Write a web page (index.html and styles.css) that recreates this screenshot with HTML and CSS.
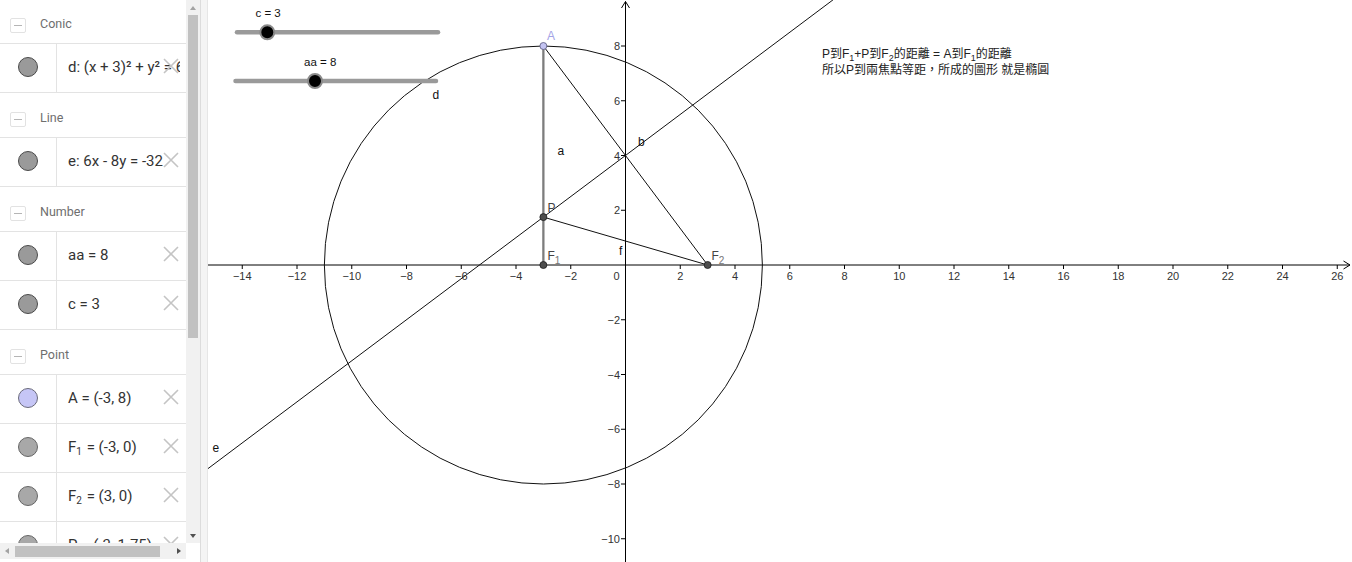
FILE: index.html
```html
<!DOCTYPE html>
<html>
<head>
<meta charset="utf-8">
<title>GeoGebra</title>
<link rel="stylesheet" href="styles.css">
</head>
<body>
<div class="app">
  <aside class="algebra">
    <div class="alg-main">
      <div class="alg-list">
        <div class="group first"><span class="collapse"></span><span class="gname">Conic</span></div>
        <div class="item"><div class="marble"><span class="dot"></span></div><div class="expr"><span>d: (x + 3)² + y² = 64</span></div><svg class="del" viewBox="0 0 16 16"><path d="M1 1L15 15M15 1L1 15"/></svg></div>
        <div class="group"><span class="collapse"></span><span class="gname">Line</span></div>
        <div class="item"><div class="marble"><span class="dot"></span></div><div class="expr"><span>e: 6x - 8y = -32</span></div><svg class="del" viewBox="0 0 16 16"><path d="M1 1L15 15M15 1L1 15"/></svg></div>
        <div class="group"><span class="collapse"></span><span class="gname">Number</span></div>
        <div class="item"><div class="marble"><span class="dot"></span></div><div class="expr"><span>aa = 8</span></div><svg class="del" viewBox="0 0 16 16"><path d="M1 1L15 15M15 1L1 15"/></svg></div>
        <div class="item"><div class="marble"><span class="dot"></span></div><div class="expr"><span>c = 3</span></div><svg class="del" viewBox="0 0 16 16"><path d="M1 1L15 15M15 1L1 15"/></svg></div>
        <div class="group"><span class="collapse"></span><span class="gname">Point</span></div>
        <div class="item"><div class="marble"><span class="dot blue"></span></div><div class="expr"><span>A = (-3, 8)</span></div><svg class="del" viewBox="0 0 16 16"><path d="M1 1L15 15M15 1L1 15"/></svg></div>
        <div class="item"><div class="marble"><span class="dot light"></span></div><div class="expr"><span>F<sub>1</sub> = (-3, 0)</span></div><svg class="del" viewBox="0 0 16 16"><path d="M1 1L15 15M15 1L1 15"/></svg></div>
        <div class="item"><div class="marble"><span class="dot light"></span></div><div class="expr"><span>F<sub>2</sub> = (3, 0)</span></div><svg class="del" viewBox="0 0 16 16"><path d="M1 1L15 15M15 1L1 15"/></svg></div>
        <div class="item"><div class="marble"><span class="dot light"></span></div><div class="expr"><span>P = (-3, 1.75)</span></div><svg class="del" viewBox="0 0 16 16"><path d="M1 1L15 15M15 1L1 15"/></svg></div>
      </div>
      <div class="vscroll">
        <span class="sb-btn up"></span>
        <span class="vthumb"></span>
        <span class="sb-fill"></span>
        <span class="sb-btn down"></span>
      </div>
    </div>
    <div class="hscroll-row">
      <div class="hscroll">
        <span class="sb-btn left"></span>
        <span class="hthumb"></span>
        <span class="sb-fill"></span>
        <span class="sb-btn right"></span>
      </div>
      <div class="corner"></div>
    </div>
  </aside>
  <div class="splitter"></div>
  <main class="graphics">
    <svg class="plot" width="1144" height="562" viewBox="208 0 1144 562">
      <!-- axes -->
      <g class="axis">
        <line x1="208" y1="265" x2="1350" y2="265"/>
        <polyline points="1343.5,261 1350,265 1343.5,269"/>
        <line x1="625.5" y1="1.5" x2="625.5" y2="562"/>
        <polyline points="621.5,8 625.5,1.5 629.5,8"/>
        <path d="M242.25 265v4M297 265v4M351.75 265v4M406.5 265v4M461.25 265v4M516 265v4M570.75 265v4M680.25 265v4M735 265v4M789.75 265v4M844.5 265v4M899.25 265v4M954 265v4M1008.75 265v4M1063.5 265v4M1118.25 265v4M1173 265v4M1227.75 265v4M1282.5 265v4M1337.25 265v4"/>
        <path d="M621 46h4.5M621 100.75h4.5M621 155.5h4.5M621 210.25h4.5M621 319.75h4.5M621 374.5h4.5M621 429.25h4.5M621 484h4.5M621 538.75h4.5"/>
      </g>
      <g class="ax xl">
        <text x="242.25" y="279.5">−14</text>
        <text x="297" y="279.5">−12</text>
        <text x="351.75" y="279.5">−10</text>
        <text x="406.5" y="279.5">−8</text>
        <text x="461.25" y="279.5">−6</text>
        <text x="516" y="279.5">−4</text>
        <text x="570.75" y="279.5">−2</text>
        <text x="616.5" y="279.5">0</text>
        <text x="680.25" y="279.5">2</text>
        <text x="735" y="279.5">4</text>
        <text x="789.75" y="279.5">6</text>
        <text x="844.5" y="279.5">8</text>
        <text x="899.25" y="279.5">10</text>
        <text x="954" y="279.5">12</text>
        <text x="1008.75" y="279.5">14</text>
        <text x="1063.5" y="279.5">16</text>
        <text x="1118.25" y="279.5">18</text>
        <text x="1173" y="279.5">20</text>
        <text x="1227.75" y="279.5">22</text>
        <text x="1282.5" y="279.5">24</text>
        <text x="1337.25" y="279.5">26</text>
      </g>
      <g class="ax yl">
        <text x="620" y="50">8</text>
        <text x="620" y="104.75">6</text>
        <text x="620" y="159.5">4</text>
        <text x="620" y="214.25">2</text>
        <text x="620" y="323.75">−2</text>
        <text x="620" y="378.5">−4</text>
        <text x="620" y="433.25">−6</text>
        <text x="620" y="488">−8</text>
        <text x="620" y="542.75">−10</text>
      </g>

      <!-- objects -->
      <circle class="obj" cx="543.375" cy="265" r="219"/>
      <line class="obj" x1="200" y1="474.6" x2="840" y2="-5.4"/>
      <line class="seg-a" x1="543.375" y1="46" x2="543.375" y2="265"/>
      <line class="obj" x1="543.375" y1="46" x2="707.625" y2="265"/>
      <line class="obj" x1="543.375" y1="217.1" x2="707.625" y2="265"/>

      <circle class="pt" cx="543.375" cy="265" r="3.5"/>
      <circle class="pt" cx="707.625" cy="265" r="3.5"/>
      <circle class="pt" cx="543.375" cy="217.1" r="3.5"/>
      <circle class="pt-a" cx="543.375" cy="46" r="3.5"/>

      <g class="lbl">
        <text class="lbl-a" x="547" y="40">A</text>
        <text class="lbl-p" x="547.5" y="212">P</text>
        <text class="lbl-p" x="547.5" y="259.5">F<tspan class="sub" dy="4.5">1</tspan></text>
        <text class="lbl-p" x="711.5" y="259.5">F<tspan class="sub" dy="4.5">2</tspan></text>
        <text x="557.5" y="155">a</text>
        <text x="638" y="146">b</text>
        <text x="619" y="255">f</text>
        <text x="212.5" y="451.5">e</text>
        <text x="432.5" y="98.5">d</text>
      </g>

      <!-- sliders -->
      <g class="slider">
        <line class="track" x1="237" y1="32.3" x2="438" y2="32.3"/>
        <circle class="knob" cx="267.3" cy="32.3" r="7"/>
        <line class="track" x1="235.5" y1="81" x2="436" y2="81"/>
        <circle class="knob" cx="315" cy="81" r="7"/>
      </g>
      <g class="slabel">
        <text x="255.5" y="16.7">c = 3</text>
        <text x="304" y="65.7">aa = 8</text>
      </g>

      <!-- text -->
      <g class="note">
        <text x="822" y="57.5">P到F<tspan class="nsub" dy="3">1</tspan><tspan dy="-3">+P到F</tspan><tspan class="nsub" dy="3">2</tspan><tspan dy="-3">的距離 = A到F</tspan><tspan class="nsub" dy="3">1</tspan><tspan dy="-3">的距離</tspan></text>
        <text x="822" y="73.5">所以P到兩焦點等距，所成的圖形 就是橢圓</text>
      </g>
    </svg>
  </main>
</div>
</body>
</html>
```

FILE: styles.css
```css
html, body {
  margin: 0;
  padding: 0;
  background: #fff;
}

body {
  font-family: Roboto, "Liberation Sans", Arial, sans-serif;
  overflow: hidden;
}

.app {
  display: flex;
  width: 1352px;
  height: 562px;
  overflow: hidden;
}

/* ---------- algebra view ---------- */
.algebra {
  width: 200px;
  flex: none;
  display: flex;
  flex-direction: column;
  background: #fff;
}

.alg-main {
  display: flex;
  height: 543px;
}

.alg-list {
  width: 186px;
  flex: none;
  overflow: hidden;
}

.group {
  box-sizing: border-box;
  height: 45px;
  padding-top: 4px;
  border-bottom: 1px solid #e3e3e3;
  display: flex;
  align-items: center;
}

.group.first {
  height: 44px;
  padding-top: 3px;
}

.collapse {
  box-sizing: border-box;
  width: 16px;
  height: 15px;
  margin-left: 10px;
  margin-top: 4px;
  border: 1px solid #e2e2e2;
  border-radius: 2px;
  display: flex;
  align-items: center;
  justify-content: center;
}

.collapse::before {
  content: "";
  width: 8px;
  height: 1px;
  background: #b5b5b5;
}

.gname {
  margin-left: 14px;
  font-size: 12.5px;
  color: #6e6e6e;
}

.item {
  box-sizing: border-box;
  height: 49px;
  border-bottom: 1px solid #e3e3e3;
  display: flex;
  position: relative;
}

.marble {
  box-sizing: border-box;
  width: 57px;
  flex: none;
  border-right: 1px solid #e3e3e3;
  padding-bottom: 3px;
  display: flex;
  align-items: center;
  justify-content: center;
}

.dot {
  box-sizing: border-box;
  width: 20px;
  height: 20px;
  border-radius: 50%;
  background: #9a9a9a;
  border: 1.3px solid #4a4a4a;
}

.dot.blue {
  background: #c6c6f6;
  border-color: #6a6a7a;
}

.dot.light {
  background: #a8a8a8;
  border-color: #666;
}

.expr {
  flex: 1;
  min-width: 0;
  padding-left: 11px;
  padding-bottom: 3px;
  margin-right: 6px;
  display: flex;
  align-items: center;
  white-space: nowrap;
  overflow: hidden;
  font-size: 15px;
  color: #333;
}

.expr sub {
  font-size: 10px;
  vertical-align: -3px;
  line-height: 0;
  margin-right: 1px;
}

.del {
  position: absolute;
  right: 7px;
  top: 14px;
  width: 16px;
  height: 16px;
  fill: none;
  stroke: #c4c4c4;
  stroke-width: 1.6;
}

/* scrollbars */
.vscroll {
  width: 14px;
  flex: none;
  background: #f1f1f1;
  display: flex;
  flex-direction: column;
  align-items: center;
}

.sb-btn {
  flex: none;
  display: flex;
  align-items: center;
  justify-content: center;
}

.sb-btn.up,
.sb-btn.down {
  width: 14px;
  height: 15px;
}

.sb-btn.up::before {
  content: "";
  border-left: 3.5px solid transparent;
  border-right: 3.5px solid transparent;
  border-bottom: 4px solid #a3a3a3;
}

.sb-btn.down {
  height: 14px;
}

.sb-btn.down::before {
  content: "";
  margin-top: -1px;
  border-left: 3.5px solid transparent;
  border-right: 3.5px solid transparent;
  border-top: 4px solid #505050;
}

.vthumb {
  flex: none;
  width: 10px;
  height: 323px;
  background: #c1c1c1;
}

.sb-fill {
  flex: 1;
}

.hscroll-row {
  display: flex;
  height: 16px;
}

.hscroll {
  width: 186px;
  flex: none;
  background: #f1f1f1;
  display: flex;
  align-items: center;
}

.sb-btn.left,
.sb-btn.right {
  width: 14px;
  height: 16px;
}

.sb-btn.left::before {
  content: "";
  border-top: 3.5px solid transparent;
  border-bottom: 3.5px solid transparent;
  border-right: 4px solid #a3a3a3;
}

.sb-btn.right::before {
  content: "";
  border-top: 3.5px solid transparent;
  border-bottom: 3.5px solid transparent;
  border-left: 4px solid #505050;
}

.hthumb {
  flex: none;
  width: 145px;
  height: 11px;
  margin-left: 1px;
  background: #c1c1c1;
}

.corner {
  flex: 1;
  background: #fff;
}

/* ---------- splitter ---------- */
.splitter {
  box-sizing: border-box;
  width: 8px;
  flex: none;
  background: #f4f4f4;
  border-left: 1px solid #dcdcdc;
  border-right: 1px solid #e6e6e6;
}

/* ---------- graphics view ---------- */
.graphics {
  flex: 1;
  min-width: 0;
  background: #fff;
}

.plot {
  display: block;
}

.axis {
  fill: none;
  stroke: #000;
  stroke-width: 1;
}

.ax {
  font-family: "Liberation Sans", Arial, sans-serif;
  font-size: 11px;
  fill: #333;
}

.xl {
  text-anchor: middle;
}

.yl {
  text-anchor: end;
}

.obj {
  fill: none;
  stroke: #111;
  stroke-width: 1;
}

.seg-a {
  stroke: #7d7d7d;
  stroke-width: 2.3;
}

.pt {
  fill: #4d4d4d;
  stroke: #1a1a1a;
  stroke-width: 0.8;
}

.pt-a {
  fill: #c4c4f2;
  stroke: #55557a;
  stroke-width: 0.8;
}

.lbl {
  font-family: "Liberation Sans", Arial, sans-serif;
  font-size: 12px;
  fill: #111;
}

.lbl .lbl-a {
  fill: #a3a3e6;
}

.lbl .lbl-p {
  fill: #444;
}

.lbl .sub {
  font-size: 10px;
  fill: #777;
}

.slider .track {
  stroke: #9a9a9a;
  stroke-width: 4.5;
  stroke-linecap: round;
}

.slider .knob {
  fill: #000;
  stroke: #8a8a8a;
  stroke-width: 2;
}

.slabel {
  font-family: "Liberation Sans", Arial, sans-serif;
  font-size: 11.5px;
  fill: #111;
}

.note {
  font-family: "Liberation Sans", "Noto Sans CJK TC", sans-serif;
  font-size: 12px;
  fill: #222;
}

.note .nsub {
  font-size: 9px;
}
```
